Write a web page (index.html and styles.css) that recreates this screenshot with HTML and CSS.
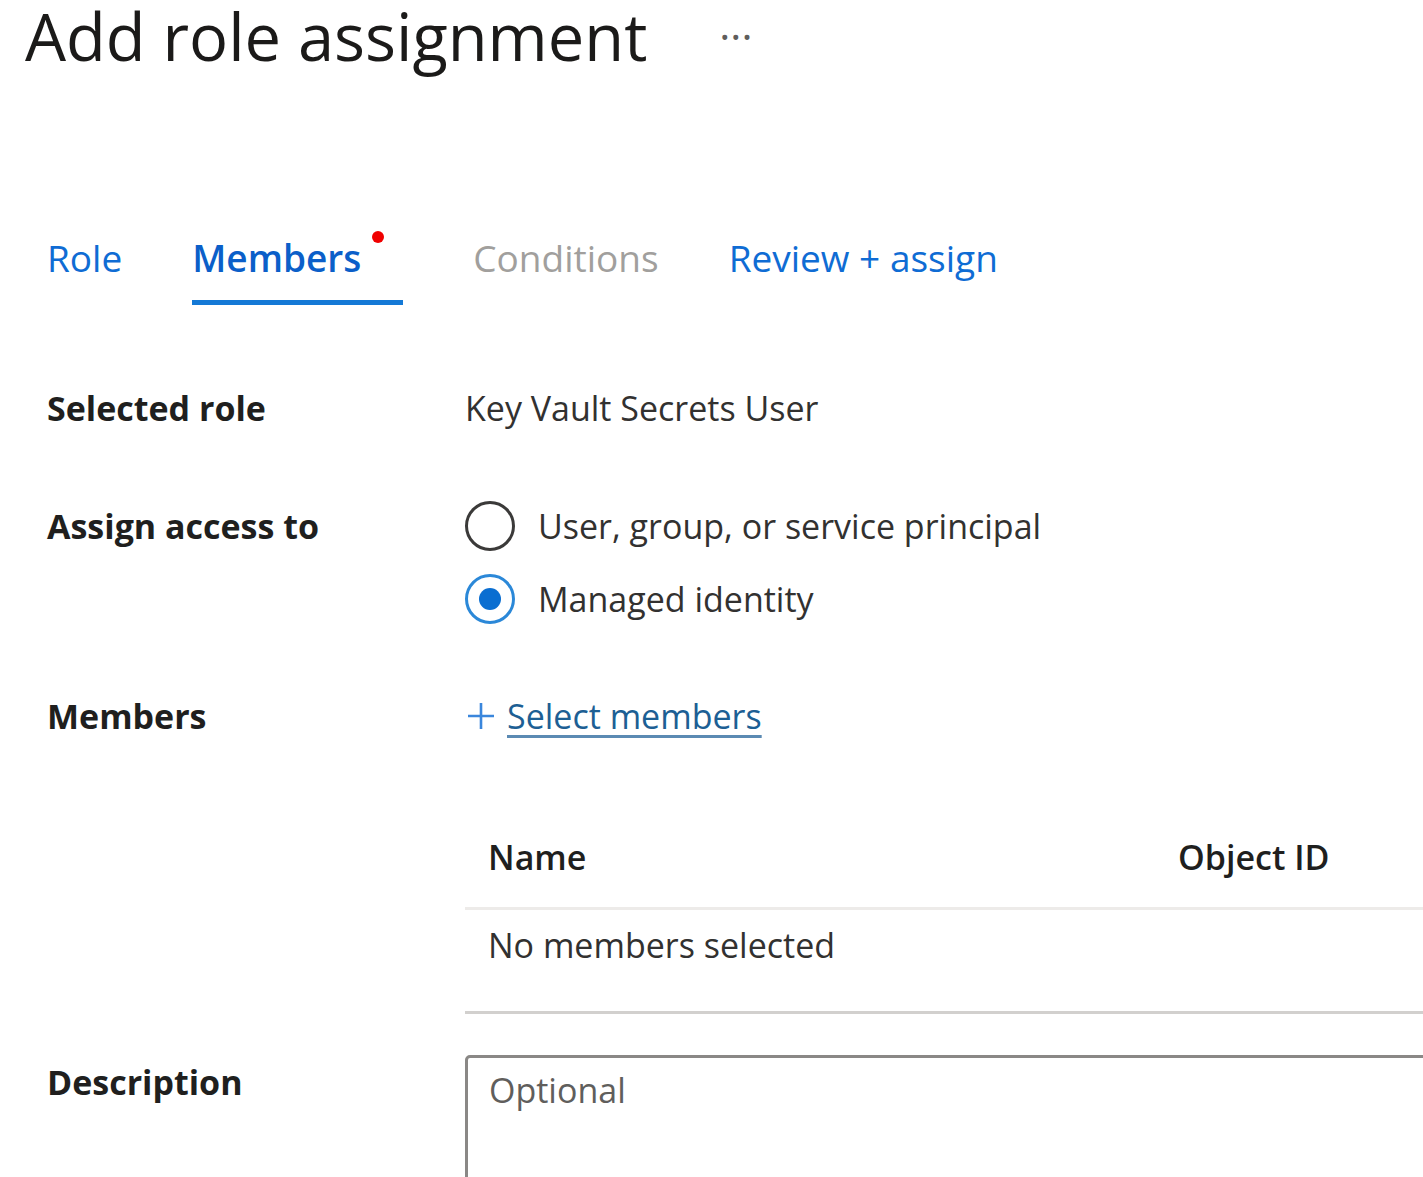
FILE: index.html
```html
<!DOCTYPE html>
<html lang="en">
<head>
<meta charset="utf-8">
<title>Add role assignment</title>
<link rel="stylesheet" href="styles.css">
</head>
<body>
<div class="page">
  <header class="title-bar">
    <h1 class="title">Add role assignment</h1>
    <span class="more">···</span>
  </header>

  <nav class="tabs">
    <a class="tab">Role</a>
    <a class="tab tab-active">Members<span class="badge"></span></a>
    <a class="tab tab-disabled">Conditions</a>
    <a class="tab">Review + assign</a>
  </nav>

  <section class="form">
    <div class="row row-role">
      <div class="label">Selected role</div>
      <div class="value">Key Vault Secrets User</div>
    </div>

    <div class="row row-access">
      <div class="label">Assign access to</div>
      <div class="radios">
        <label class="radio"><span class="radio-circle"></span><span>User, group, or service principal</span></label>
        <label class="radio"><span class="radio-circle radio-checked"></span><span>Managed identity</span></label>
      </div>
    </div>

    <div class="row row-members">
      <div class="label">Members</div>
      <div class="value">
        <a class="select-link"><svg class="plus" viewBox="0 0 32 32" width="32" height="32"><path d="M16 3v26M3 16h26" stroke="#3a86dc" stroke-width="2.6" fill="none"/></svg><span class="link-text">Select members</span></a>
      </div>
    </div>

    <div class="row row-table">
      <div class="label"></div>
      <div class="table">
        <div class="thead">
          <div class="th th-name">Name</div>
          <div class="th th-id">Object ID</div>
        </div>
        <div class="tbody">
          <div class="td">No members selected</div>
        </div>
      </div>
    </div>

    <div class="row row-desc">
      <div class="label label-desc">Description</div>
      <div class="textarea"><span class="placeholder">Optional</span></div>
    </div>
  </section>
</div>
</body>
</html>
```

FILE: styles.css
```css
html, body {
  margin: 0;
  padding: 0;
  background: #ffffff;
  overflow: hidden;
}

body {
  font-family: "Open Sans", "Noto Sans", sans-serif;
  color: #323130;
}

.page {
  width: 1423px;
  height: 1177px;
  overflow: hidden;
}

.title-bar {
  display: flex;
  align-items: center;
  height: 90px;
  margin-top: -9px;
  padding-left: 25px;
}

.title {
  margin: 0;
  font-size: 65px;
  font-weight: 500;
  line-height: 90px;
  color: #1b1a19;
  white-space: nowrap;
}

.more {
  margin-left: 72px;
  font-size: 42px;
  color: #605e5c;
  line-height: 42px;
}

.tabs {
  display: flex;
  margin-top: 152px;
  padding-left: 47px;
  gap: 70px;
}

.tab {
  position: relative;
  font-size: 37px;
  line-height: 50px;
  color: #0f6cd4;
  padding-bottom: 17px;
  border-bottom: 5px solid transparent;
}

.tab-active {
  color: #0b5fc9;
  font-weight: 600;
  padding-right: 42px;
  border-bottom-color: #1479d6;
}

.tab-disabled {
  color: #a19f9d;
}

.badge {
  position: absolute;
  top: -2px;
  right: 19px;
  width: 12px;
  height: 12px;
  border-radius: 50%;
  background: #f00000;
}

.form {
  padding-left: 47px;
}

.row {
  display: grid;
  grid-template-columns: 418px 1fr;
  align-items: start;
}

.label {
  font-size: 34px;
  font-weight: 700;
  line-height: 50px;
  color: #201f1e;
}

.value {
  font-size: 34px;
  line-height: 50px;
  color: #323130;
}

.row-role {
  margin-top: 78px;
}

.row-access {
  margin-top: 68px;
}

.radios {
  display: flex;
  flex-direction: column;
  gap: 23px;
}

.radio {
  display: flex;
  align-items: center;
  gap: 23px;
  font-size: 34px;
  line-height: 50px;
  color: #323130;
}

.radio-circle {
  box-sizing: border-box;
  width: 50px;
  height: 50px;
  border-radius: 50%;
  border: 3px solid #3b3a39;
  flex: none;
  display: flex;
  align-items: center;
  justify-content: center;
}

.radio-checked {
  border-color: #2b88d8;
}

.radio-checked::after {
  content: "";
  width: 22px;
  height: 22px;
  border-radius: 50%;
  background: #0a6ed1;
}

.row-members {
  margin-top: 67px;
}

.select-link {
  display: inline-flex;
  align-items: center;
  color: #1d5f94;
}

.plus {
  flex: none;
}

.link-text {
  padding-left: 10px;
  text-decoration: underline;
  text-decoration-color: #5b8ab3;
  text-decoration-thickness: 3px;
  text-underline-offset: 6px;
}

.row-table {
  margin-top: 88px;
}

.table {
  min-width: 0;
}

.thead {
  display: flex;
  height: 75px;
  border-bottom: 3px solid #edebe9;
  padding-left: 23px;
}

.th {
  font-size: 34px;
  font-weight: 600;
  line-height: 50px;
  color: #201f1e;
}

.th-name {
  width: 690px;
}

.tbody {
  padding: 10px 0 41px 23px;
  border-bottom: 3px solid #d2d0ce;
}

.td {
  font-size: 34px;
  line-height: 50px;
  color: #323130;
}

.row-desc {
  margin-top: 41px;
}

.label-desc {
  margin-top: 2px;
}

.textarea {
  box-sizing: border-box;
  width: 1100px;
  height: 200px;
  border: 3px solid #8a8886;
  border-radius: 5px;
  padding: 7px 0 0 21px;
}

.placeholder {
  font-size: 34px;
  line-height: 50px;
  color: #605e5c;
}
```
